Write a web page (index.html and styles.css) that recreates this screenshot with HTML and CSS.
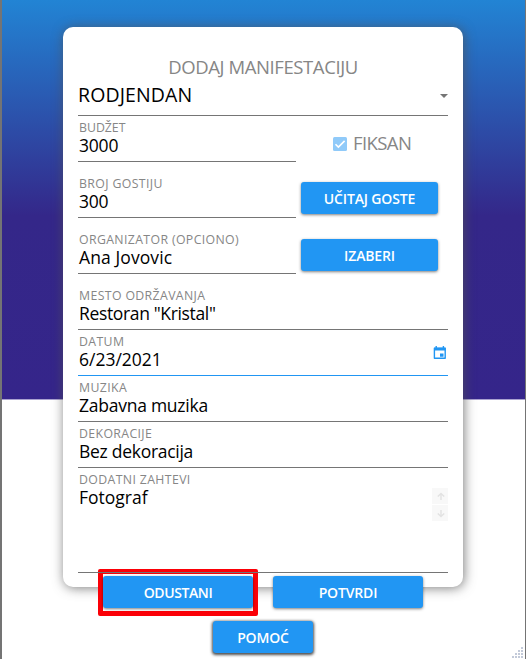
FILE: index.html
```html
<!DOCTYPE html>
<html lang="sr">
<head>
<meta charset="utf-8">
<title>Dodaj manifestaciju</title>
<link rel="stylesheet" href="styles.css">
</head>
<body>
<main class="window">
  <section class="card">
    <h1 class="title"><span>DODAJ MANIFESTACIJU</span></h1>
    <div class="select"><span>RODJENDAN</span><i class="caret"></i></div>
    <div class="row">
      <div class="field short"><label class="l-budget">BUDŽET</label><p class="num">3000</p></div>
      <div class="check">
        <svg width="14" height="14" viewBox="0 0 14 14"><rect width="14" height="14" rx="1.5" fill="#90caf9"/><path d="M2.5 7.2 5.4 10.1 11.6 3.9" fill="none" stroke="#fff" stroke-width="1.6"/></svg>
        <span>FIKSAN</span>
      </div>
    </div>
    <div class="row">
      <div class="field short tall"><label>BROJ GOSTIJU</label><p class="num">300</p></div>
      <button class="btn side"><span>UČITAJ GOSTE</span></button>
    </div>
    <div class="row">
      <div class="field short tall"><label>ORGANIZATOR (OPCIONO)</label><p class="v-org">Ana Jovovic</p></div>
      <button class="btn side low"><span>IZABERI</span></button>
    </div>
    <div class="field tall"><label>MESTO ODRŽAVANJA</label><p class="v-place">Restoran "Kristal"</p></div>
    <div class="field active"><label>DATUM</label><p>6/23/2021</p>
      <svg class="calendar" width="14" height="14" viewBox="0 0 14 14"><path d="M3.2 0v2M10.4 0v2" stroke="#2196f3" stroke-width="1.4"/><path d="M1.4 2.2h10.8v10H1.4z" fill="none" stroke="#2196f3" stroke-width="1.4" stroke-linejoin="round"/><path d="M1 1.8h11.6v2.8H1zM7 7.4h3.5v3.4H7z" fill="#2196f3"/></svg>
    </div>
    <div class="field"><label>MUZIKA</label><p class="v-music">Zabavna muzika</p></div>
    <div class="field"><label>DEKORACIJE</label><p class="v-deco">Bez dekoracija</p></div>
    <div class="field area"><label>DODATNI ZAHTEVI</label><p>Fotograf</p>
      <div class="scroll">
        <svg width="16" height="16" viewBox="0 0 16 16"><path d="M9 12V5.5M5.8 8.6 9 5.4l3.2 3.2" fill="none" stroke="#e2e2e2" stroke-width="1.4"/></svg>
        <svg width="16" height="16" viewBox="0 0 16 16"><path d="M9 5v6.5M5.8 8.4 9 11.6l3.2-3.2" fill="none" stroke="#e2e2e2" stroke-width="1.4"/></svg>
      </div>
    </div>
    <div class="actions">
      <div class="marked"><button class="btn"><span class="b-cancel">ODUSTANI</span></button></div>
      <button class="btn"><span>POTVRDI</span></button>
    </div>
  </section>
  <button class="btn help"><span>POMOĆ</span></button>
  <svg class="grip" width="12" height="12" viewBox="0 0 12 12" fill="#c3cad9"><path d="M0 9h2v2H0zM3 9h2v2H3zM6 9h2v2H6zM9 9h2v2H9zM3 6h2v2H3zM6 6h2v2H6zM9 6h2v2H9zM6 3h2v2H6zM9 3h2v2H9zM9 0h2v2H9z"/></svg>
</main>
</body>
</html>
```
FILE: styles.css
```css
* { box-sizing: border-box; }
body { margin: 0; font-family: "Open Sans", "Noto Sans", sans-serif; color: #000; }
p, h1 { margin: 0; font-weight: 400; }
.window {
  position: relative;
  width: 526px; height: 659px;
  padding: 27px 0 0 61px;
  border-left: 2px solid #747474;
  border-right: 1px solid #747474;
  background: linear-gradient(#2284d4 0, #342789 216px, #35258a 399px, #aaa2d0 399px, #aaa2d0 400px, #fff 400px);
  overflow: hidden;
}
.card {
  width: 400px; height: 560px;
  padding: 27px 15px 0;
  border-radius: 10px;
  background: #fff;
  box-shadow: 1px 1px 12px rgba(80, 80, 80, .75);
}
.title { height: 26px; text-align: center; font-size: 18.5px; line-height: 26px; color: #868686; }
.title span { letter-spacing: -.4px; }
.select {
  display: flex; align-items: flex-start; justify-content: space-between;
  height: 36px; border-bottom: 1px solid #757575;
  font-size: 19.5px; line-height: 30px; letter-spacing: .1px;
}
.caret { margin-top: 14px; border: 4px solid transparent; border-top-color: #757575; border-bottom: 0; }
.row { display: flex; gap: 5px; align-items: flex-start; }
.field { position: relative; height: 46px; padding: 4px 1px 0; border-bottom: 1px solid #757575; }
.field.short { width: 218px; }
.field.tall { height: 56px; padding-top: 14px; }
.field.area { height: 105px; }
.field.active { border-color: #2196f3; }
label { display: block; width: max-content; font-size: 12.3px; line-height: 16px; letter-spacing: .37px; color: #868686; }
.l-budget { letter-spacing: 0; }
.field p { width: max-content; margin-top: -1px; font-size: 17.5px; line-height: 20px; }
.field .num { letter-spacing: -.2px; }
.field .v-org { letter-spacing: .1px; }
.field .v-place { letter-spacing: -.35px; }
.field .v-music { letter-spacing: -.25px; }
.field .v-deco { letter-spacing: -.28px; }
.calendar { position: absolute; right: 1px; top: 16px; }
.scroll { position: absolute; right: 0; top: 20px; display: grid; gap: 1px; }
.scroll svg { background: #f8f8f8; }
.check { display: flex; align-items: center; gap: 6px; margin: 13px 0 0 32px; height: 28px; font-size: 18.5px; line-height: 28px; letter-spacing: -.6px; color: #868686; }
.check svg { position: relative; top: 1px; }
.btn {
  width: 150px; height: 32px; padding: 0; border: 0; border-radius: 3px;
  background: #2196f3; color: #fff;
  font: 600 14px/34px "Open Sans", sans-serif;
  letter-spacing: -.15px;
  box-shadow: 0 1px 3px rgba(0, 0, 0, .5);
}
.b-cancel { letter-spacing: -.4px; }
.side { width: 137px; margin-top: 20px; }
.side.low { margin-top: 21px; }
.actions { display: flex; align-items: flex-start; gap: 15px; margin: -4px 0 0 20px; height: 47px; }
.actions > .btn { margin-top: 7px; }
.marked { display: flex; align-items: flex-start; width: 160px; height: 47px; padding: 2px 0 0; border: 5px solid #fb0007; border-radius: 2px; background: #fff; }
.help { display: block; width: 100px; margin: 34px 0 0 150px; box-shadow: 0 1px 3px 1px rgba(0, 0, 0, .7); }
.grip { position: absolute; right: 1px; bottom: 0; }
```
